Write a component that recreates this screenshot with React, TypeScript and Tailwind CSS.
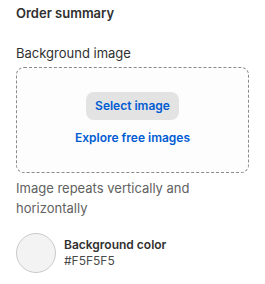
export default function App() {
  return (
    <div className="w-[265px] h-[284px] bg-white px-4 pt-[3px] font-['Inter',sans-serif] text-[13px] leading-5 text-[#303030]">
      <h2 className="font-semibold">Order summary</h2>

      <div className="mt-5">
        <label className="block">Background image</label>
        <div className="mt-1 flex flex-col items-center rounded-lg border border-dashed border-[#8a8a8a] bg-[#fdfdfd] pt-6 pb-6">
          <button className="h-7 rounded-lg bg-[#e3e3e3] px-[9px] text-xs font-semibold text-[#005bd3]">
            Select image
          </button>
          <a className="mt-2 text-xs leading-5 font-semibold text-[#005bd3]">Explore free images</a>
        </div>
        <p className="mt-[5px] text-[#616161]">Image repeats vertically and horizontally</p>
      </div>

      <div className="mt-[15px] flex items-center gap-2">
        <div className="h-10 w-10 rounded-full border border-[#c9c9c9] bg-[#f3f3f3]" />
        <div className="text-xs leading-4">
          <div className="font-semibold">Background color</div>
          <div className="text-[#4a4a4a]">#F5F5F5</div>
        </div>
      </div>
    </div>
  )
}
